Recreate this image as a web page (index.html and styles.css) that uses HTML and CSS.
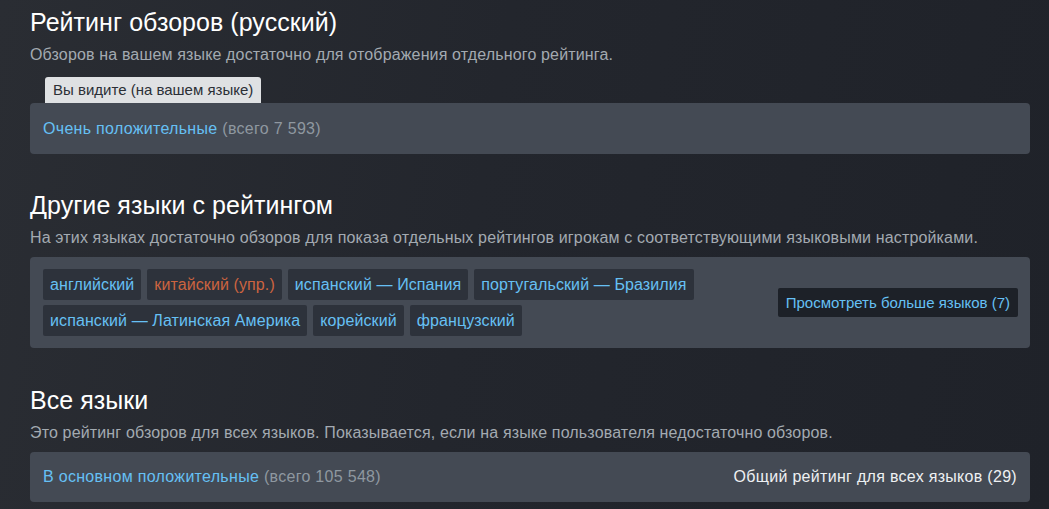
FILE: index.html
```html
<!DOCTYPE html>
<html lang="ru">
<head>
<meta charset="utf-8">
<title>Рейтинг обзоров</title>
<link rel="stylesheet" href="styles.css">
</head>
<body>
<main class="page">
  <section class="section first">
    <h2 class="title">Рейтинг обзоров (русский)</h2>
    <p class="desc">Обзоров на вашем языке достаточно для отображения отдельного рейтинга.</p>
    <div class="pill-row"><span class="pill">Вы видите (на вашем языке)</span></div>
    <div class="box">
      <span class="rating"><span class="positive">Очень положительные</span> <span class="count">(всего 7 593)</span></span>
    </div>
  </section>

  <section class="section">
    <h2 class="title">Другие языки с рейтингом</h2>
    <p class="desc">На этих языках достаточно обзоров для показа отдельных рейтингов игрокам с соответствующими языковыми настройками.</p>
    <div class="box tags-box">
      <div class="tags">
        <span class="tag">английский</span>
        <span class="tag neg">китайский (упр.)</span>
        <span class="tag">испанский — Испания</span>
        <span class="tag">португальский — Бразилия</span>
        <span class="tag">испанский — Латинская Америка</span>
        <span class="tag">корейский</span>
        <span class="tag">французский</span>
      </div>
      <span class="more-btn">Просмотреть больше языков (7)</span>
    </div>
  </section>

  <section class="section last">
    <h2 class="title">Все языки</h2>
    <p class="desc">Это рейтинг обзоров для всех языков. Показывается, если на языке пользователя недостаточно обзоров.</p>
    <div class="box split">
      <span class="rating"><span class="positive">В основном положительные</span> <span class="count">(всего 105 548)</span></span>
      <span class="total">Общий рейтинг для всех языков (29)</span>
    </div>
  </section>
</main>
</body>
</html>
```

FILE: styles.css
```css
html, body {
  margin: 0;
  padding: 0;
}

body {
  width: 1049px;
  height: 509px;
  overflow: hidden;
  background: linear-gradient(100deg, #2a2d33 0%, #23262d 45%, #1f2229 100%);
  font-family: "Liberation Sans", Arial, sans-serif;
  color: #c6d4df;
}

.page {
  padding: 8px 19px 0 30px;
}

.section {
  margin-top: 37px;
}

.section.first {
  margin-top: 0;
}

.section.last {
  margin-top: 38px;
}

.title {
  margin: 0;
  font-size: 25px;
  letter-spacing: 0.05px;
  line-height: 28px;
  font-weight: normal;
  color: #ffffff;
}

.desc {
  margin: 9px 0 0;
  font-size: 16px;
  letter-spacing: 0.15px;
  line-height: 20px;
  color: #a3aab1;
}

.pill-row {
  margin-top: 12px;
  padding-left: 15px;
  display: flex;
}

.pill {
  display: inline-block;
  background: #dfe1e3;
  color: #2b2f36;
  font-size: 15px;
  line-height: 26px;
  padding: 0 8px;
  border-radius: 3px 3px 0 0;
}

.box {
  margin-top: 9px;
  background: #444a54;
  border-radius: 4px;
  padding: 15px 13px;
  font-size: 16px;
  letter-spacing: 0.3px;
  line-height: 21px;
}

.first .box {
  margin-top: 0;
}

.positive {
  color: #66c0f4;
}

.count {
  color: #8f98a0;
}

.tags-box {
  display: flex;
  align-items: center;
  justify-content: space-between;
  padding: 12px 12px 12px 13px;
  letter-spacing: 0.1px;
}

.tags {
  display: flex;
  flex-wrap: wrap;
  gap: 5px 6px;
  width: 670px;
}

.tag {
  background: #2d323b;
  color: #66c0f4;
  line-height: 19px;
  padding: 6px 7px;
  border-radius: 2px;
}

.tag.neg {
  color: #cc6440;
}

.more-btn {
  background: #1d2128;
  color: #66c0f4;
  font-size: 15px;
  letter-spacing: 0;
  line-height: 29px;
  padding: 0 8px;
  border-radius: 2px;
}

.split {
  display: flex;
  justify-content: space-between;
  padding: 14px 13px 15px;
}

.total {
  color: #eef0f2;
}
```
